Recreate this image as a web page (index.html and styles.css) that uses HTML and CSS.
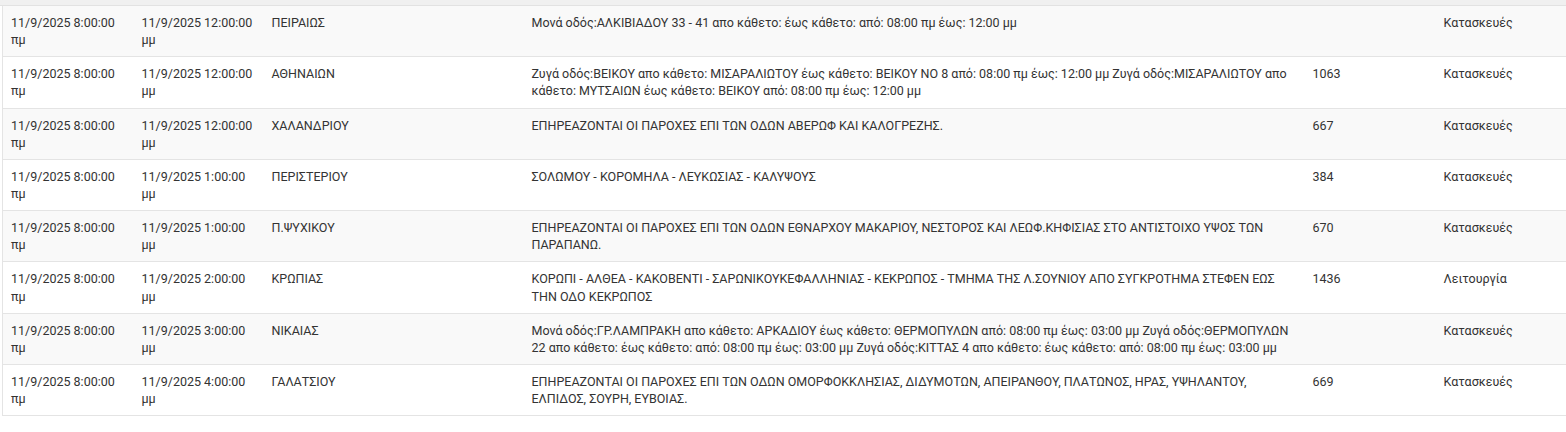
FILE: index.html
```html
<!DOCTYPE html>
<html lang="el">
<head>
<meta charset="utf-8">
<title>Διακοπές</title>
<link rel="stylesheet" href="styles.css">
</head>
<body>
<div class="strip"></div>
<table class="grid">
  <colgroup>
    <col class="c-start"><col class="c-end"><col class="c-area"><col class="c-desc"><col class="c-num"><col class="c-type">
  </colgroup>
  <tbody>
    <tr>
      <td>11/9/2025 8:00:00 πμ</td><td>11/9/2025 12:00:00 μμ</td><td>ΠΕΙΡΑΙΩΣ</td>
      <td>Μονά οδός:ΑΛΚΙΒΙΑΔΟΥ 33 - 41 απο κάθετο: έως κάθετο: από: 08:00 πμ έως: 12:00 μμ</td><td></td><td>Κατασκευές</td>
    </tr>
    <tr>
      <td>11/9/2025 8:00:00 πμ</td><td>11/9/2025 12:00:00 μμ</td><td>ΑΘΗΝΑΙΩΝ</td>
      <td>Ζυγά οδός:ΒΕΙΚΟΥ απο κάθετο: ΜΙΣΑΡΑΛΙΩΤΟΥ έως κάθετο: ΒΕΙΚΟΥ ΝΟ 8 από: 08:00 πμ έως: 12:00 μμ Ζυγά οδός:ΜΙΣΑΡΑΛΙΩΤΟΥ απο κάθετο: ΜΥΤΣΑΙΩΝ έως κάθετο: ΒΕΙΚΟΥ από: 08:00 πμ έως: 12:00 μμ</td><td>1063</td><td>Κατασκευές</td>
    </tr>
    <tr>
      <td>11/9/2025 8:00:00 πμ</td><td>11/9/2025 12:00:00 μμ</td><td>ΧΑΛΑΝΔΡΙΟΥ</td>
      <td>ΕΠΗΡΕΑΖΟΝΤΑΙ ΟΙ ΠΑΡΟΧΕΣ ΕΠΙ ΤΩΝ ΟΔΩΝ ΑΒΕΡΩΦ ΚΑΙ ΚΑΛΟΓΡΕΖΗΣ.</td><td>667</td><td>Κατασκευές</td>
    </tr>
    <tr>
      <td>11/9/2025 8:00:00 πμ</td><td>11/9/2025 1:00:00 μμ</td><td>ΠΕΡΙΣΤΕΡΙΟΥ</td>
      <td>ΣΟΛΩΜΟΥ - ΚΟΡΟΜΗΛΑ - ΛΕΥΚΩΣΙΑΣ - ΚΑΛΥΨΟΥΣ</td><td>384</td><td>Κατασκευές</td>
    </tr>
    <tr>
      <td>11/9/2025 8:00:00 πμ</td><td>11/9/2025 1:00:00 μμ</td><td>Π.ΨΥΧΙΚΟΥ</td>
      <td>ΕΠΗΡΕΑΖΟΝΤΑΙ ΟΙ ΠΑΡΟΧΕΣ ΕΠΙ ΤΩΝ ΟΔΩΝ ΕΘΝΑΡΧΟΥ ΜΑΚΑΡΙΟΥ, ΝΕΣΤΟΡΟΣ ΚΑΙ ΛΕΩΦ.ΚΗΦΙΣΙΑΣ ΣΤΟ ΑΝΤΙΣΤΟΙΧΟ ΥΨΟΣ ΤΩΝ ΠΑΡΑΠΑΝΩ.</td><td>670</td><td>Κατασκευές</td>
    </tr>
    <tr>
      <td>11/9/2025 8:00:00 πμ</td><td>11/9/2025 2:00:00 μμ</td><td>ΚΡΩΠΙΑΣ</td>
      <td>ΚΟΡΩΠΙ - ΑΛΘΕΑ - ΚΑΚΟΒΕΝΤΙ - ΣΑΡΩΝΙΚΟΥΚΕΦΑΛΛΗΝΙΑΣ - ΚΕΚΡΩΠΟΣ - ΤΜΗΜΑ ΤΗΣ Λ.ΣΟΥΝΙΟΥ ΑΠΟ ΣΥΓΚΡΟΤΗΜΑ ΣΤΕΦΕΝ ΕΩΣ ΤΗΝ ΟΔΟ ΚΕΚΡΩΠΟΣ</td><td>1436</td><td>Λειτουργία</td>
    </tr>
    <tr>
      <td>11/9/2025 8:00:00 πμ</td><td>11/9/2025 3:00:00 μμ</td><td>ΝΙΚΑΙΑΣ</td>
      <td>Μονά οδός:ΓΡ.ΛΑΜΠΡΑΚΗ απο κάθετο: ΑΡΚΑΔΙΟΥ έως κάθετο: ΘΕΡΜΟΠΥΛΩΝ από: 08:00 πμ έως: 03:00 μμ Ζυγά οδός:ΘΕΡΜΟΠΥΛΩΝ 22 απο κάθετο: έως κάθετο: από: 08:00 πμ έως: 03:00 μμ Ζυγά οδός:ΚΙΤΤΑΣ 4 απο κάθετο: έως κάθετο: από: 08:00 πμ έως: 03:00 μμ</td><td></td><td>Κατασκευές</td>
    </tr>
    <tr>
      <td>11/9/2025 8:00:00 πμ</td><td>11/9/2025 4:00:00 μμ</td><td>ΓΑΛΑΤΣΙΟΥ</td>
      <td>ΕΠΗΡΕΑΖΟΝΤΑΙ ΟΙ ΠΑΡΟΧΕΣ ΕΠΙ ΤΩΝ ΟΔΩΝ ΟΜΟΡΦΟΚΚΛΗΣΙΑΣ, ΔΙΔΥΜΟΤΩΝ, ΑΠΕΙΡΑΝΘΟΥ, ΠΛΑΤΩΝΟΣ, ΗΡΑΣ, ΥΨΗΛΑΝΤΟΥ, ΕΛΠΙΔΟΣ, ΣΟΥΡΗ, ΕΥΒΟΙΑΣ.</td><td>669</td><td>Κατασκευές</td>
    </tr>
  </tbody>
</table>
</body>
</html>
```
FILE: styles.css
```css
html, body {
  margin: 0;
  padding: 0;
  background: #fff;
}
body {
  font-family: Roboto, "Noto Sans", sans-serif;
  font-size: 12.5px;
  line-height: 17.14px;
  color: #333;
  overflow: hidden;
}
.strip {
  height: 5px;
  background: #f0f0f0;
  border-bottom: 1px solid #e2e2e2;
}
.grid {
  margin-left: 2px;
  width: 1566px;
  table-layout: fixed;
  border-collapse: collapse;
  border-left: 1px solid #e4e4e4;
}
.c-start { width: 131px; }
.c-end { width: 130px; }
.c-area { width: 260px; }
.c-desc { width: 781px; }
.c-num { width: 131px; }
.c-type { width: 133px; }
.grid td {
  padding: 8px;
  vertical-align: top;
  border-bottom: 1px solid #e4e4e4;
  height: 34px;
}
.grid tbody tr:nth-child(odd) td {
  background: #f9f9f9;
}
```
